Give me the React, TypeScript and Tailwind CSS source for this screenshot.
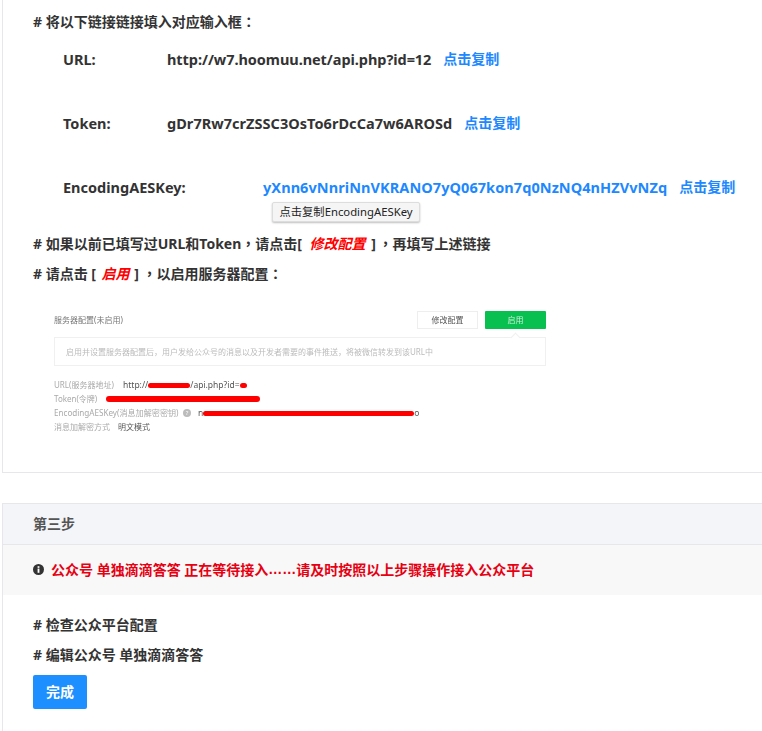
const font = "font-['Noto_Sans','Noto_Sans_CJK_SC',sans-serif]";

function CopyLink() {
  return <span className="ml-3 text-[14px] text-[#2088ff]">点击复制</span>;
}

// Noto's TC cut sets full-width punctuation centred in its cell, as in the picture
function P({ children, className = "" }: { children: string; className?: string }) {
  return <span className={`${className} font-['Noto_Sans_CJK_TC'] leading-none`}>{children}</span>;
}

function Heading({ className, children }: { className: string; children: React.ReactNode }) {
  return <p className={`${className} h-5 leading-5`}># {children}</p>;
}

function Latin({ children, className = "" }: { children: string; className?: string }) {
  return <span className={`${className} text-[14.5px]`}>{children}</span>;
}

// blurred screenshot of the WeChat server config page
function ConfigShot() {
  return (
    <div className="ml-[21px] mt-[22px] h-[145px] w-[492px] whitespace-nowrap pt-[6px] text-[8px] font-normal leading-[14px] text-[#aaa] blur-[0.5px]">
      <div className="flex h-[18px] items-center justify-between">
        <span className="text-[#777]">服务器配置(未启用)</span>
        <div className="flex gap-[7px]">
          <span className="flex h-[18px] w-[61px] items-center justify-center border border-[#eee] text-[#555]">修改配置</span>
          <span className="flex h-[18px] w-[61px] items-center justify-center rounded-[1px] bg-[#07c050] text-[#cdeedb]">启用</span>
        </div>
      </div>
      <div className="relative mt-[8px] flex h-[29px] items-center border border-[#f0f0f0] pl-[11px] text-[#bbb]">
        启用并设置服务器配置后，用户发给公众号的消息以及开发者需要的事件推送，将被微信转发到该URL中
        <span className="absolute right-[26px] top-[-4px] h-[7px] w-[7px] rotate-45 border-l border-t border-[#f0f0f0] bg-white" />
      </div>
      <div className="mt-[12px] flex h-[14px] items-center">
        <span className="w-[69px]">URL(服务器地址)</span>
        <span className="text-[8.5px] text-[#555]">http://</span>
        <span className="h-[5px] w-[42px] rounded-full bg-[#f00]" />
        <span className="text-[8.5px] text-[#555]">/api.php?id=</span>
        <span className="h-[5px] w-[7px] rounded-full bg-[#f00]" />
      </div>
      <div className="flex h-[14px] items-center">
        <span className="w-[52px]">Token(令牌)</span>
        <span className="h-[6px] w-[154px] rounded-full bg-[#f00]" />
      </div>
      <div className="flex h-[14px] items-center">
        <span className="w-[129px] text-[8.1px]">EncodingAESKey(消息加解密密钥)</span>
        <span className="flex h-[8px] w-[8px] items-center justify-center rounded-full bg-[#bbb] text-[6px] text-white">?</span>
        <span className="ml-[7px] text-[8.5px] text-[#555]">n</span>
        <span className="h-[5px] w-[211px] rounded-full bg-[#f00]" />
        <span className="text-[8.5px] text-[#555]">o</span>
      </div>
      <div className="flex h-[14px] items-center">
        <span className="w-[64px]">消息加解密方式</span>
        <span className="text-[#555]">明文模式</span>
      </div>
    </div>
  );
}

function InfoIcon() {
  return (
    <svg viewBox="0 0 12 12" className="mr-[7px] h-[11px] w-[11px] shrink-0">
      <circle cx="6" cy="6" r="6" fill="#333" />
      <rect x="5" y="2.4" width="2" height="1.8" fill="#fff" />
      <rect x="5" y="5" width="2" height="4.6" fill="#fff" />
    </svg>
  );
}

export default function App() {
  return (
    <div className={`${font} h-[731px] w-[762px] overflow-hidden bg-white text-[14px] font-bold text-[#333]`}>
      <section className="relative ml-[2px] h-[473px] border-b border-l border-[#e7e7eb] pl-[30px] pt-[11px]">
        <Heading className="pt-[1px]">将以下链接链接填入对应输入框<P>：</P></Heading>
        <div className="mt-[18px] flex h-5 items-center pl-[30px] leading-5">
          <span className="w-[104px]"><Latin>URL:</Latin></span>
          <Latin className="tracking-[-0.06px]">http://w7.hoomuu.net/api.php?id=12</Latin>
          <CopyLink />
        </div>
        <div className="mt-[44px] flex h-5 items-center pl-[30px] leading-5">
          <span className="w-[104px]"><Latin>Token:</Latin></span>
          <Latin className="tracking-[0.04px]">gDr7Rw7crZSSC3OsTo6rDcCa7w6AROSd</Latin>
          <CopyLink />
        </div>
        <div className="mt-[44px] flex h-5 items-center pl-[30px] leading-5">
          <span className="w-[200px]"><Latin>EncodingAESKey:</Latin></span>
          <span className="text-[#2088ff]"><Latin className="tracking-[0.07px]">yXnn6vNnriNnVKRANO7yQ067kon7q0NzNQ4nHZVvNZq</Latin></span>
          <CopyLink />
        </div>
        <Heading className="mt-[36px] pt-[1px]">
          如果以前已填写过URL和Token<P>，</P>请点击[ <em className="ml-[4px] mr-[2px] text-[#f00]">修改配置</em> ] <P className="-ml-[1px]">，</P>再填写上述链接
        </Heading>
        <Heading className="mt-[10px] pt-[1px]">
          请点击 [ <em className="ml-[2px] mr-[1px] text-[#f00]">启用</em> ] <P>，</P>以启用服务器配置<P>：</P>
        </Heading>
        <ConfigShot />
        <div className="absolute left-[269px] top-[202px] flex h-[20px] w-[148px] items-center justify-center rounded-[2px] border border-[#ddd] bg-[#f5f5f5] text-[11.3px] font-normal text-[#222] shadow-[0_1px_2px_rgba(0,0,0,0.25)]">
          点击复制EncodingAESKey
        </div>
      </section>

      <section className="ml-[2px] mt-[30px] h-[300px] border-l border-t border-[#e7e7eb]">
        <div className="flex h-[41px] items-center border-b border-[#e7e7eb] bg-[#f4f5f9] pb-[1px] pl-[30px] text-[#555]">第三步</div>
        <div className="flex h-[50px] items-center bg-[#f8f8f8] pb-[2px] pl-[30px] text-[#e60012]">
          <InfoIcon />
          公众号 单独滴滴答答 正在等待接入<span className="font-['Liberation_Sans']">……</span>请及时按照以上步骤操作接入公众平台
        </div>
        <div className="pl-[30px] pt-[20px]">
          <Heading className="">检查公众平台配置</Heading>
          <Heading className="mt-[10px]">编辑公众号 单独滴滴答答</Heading>
          <button className="mt-[10px] h-[34px] w-[54px] rounded-[2px] bg-[#1e8fff] pb-[1px] text-white">完成</button>
        </div>
      </section>
    </div>
  );
}
